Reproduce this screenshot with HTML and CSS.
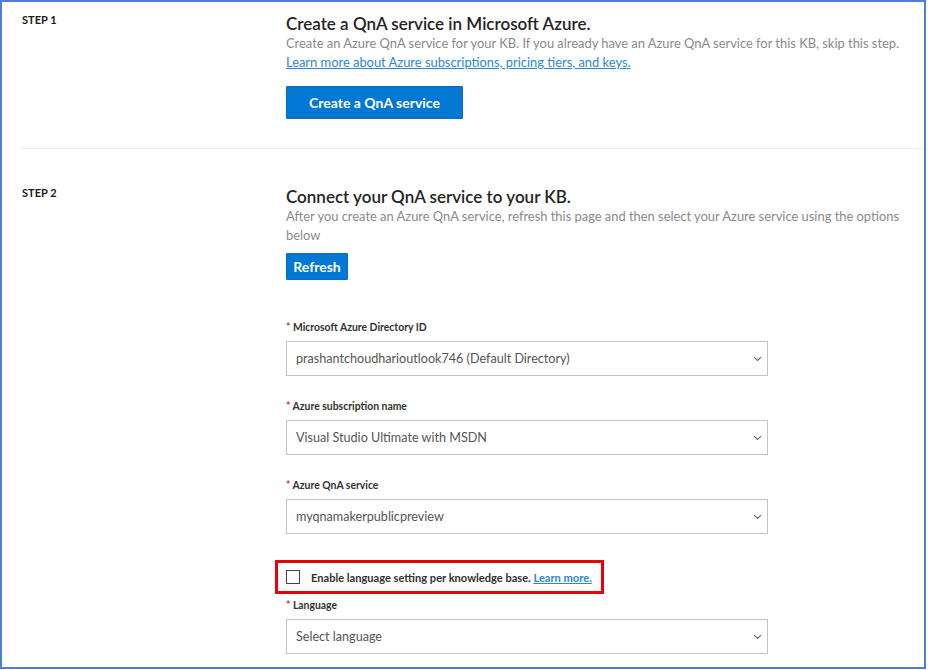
FILE: index.html
```html
<!DOCTYPE html>
<html lang="en">
<head>
<meta charset="utf-8">
<title>QnA service setup</title>
<link rel="stylesheet" href="styles.css">
</head>
<body>
<div class="frame">
  <section class="step step-one">
    <div class="step-label">STEP 1</div>
    <div class="step-body">
      <h2 class="step-title">Create a QnA service in Microsoft Azure.</h2>
      <p class="step-text">Create an Azure QnA service for your KB. If you already have an Azure QnA service for this KB, skip this step.</p>
      <p class="step-text"><a class="link" href="#">Learn more about Azure subscriptions, pricing tiers, and keys.</a></p>
      <button class="btn btn-large" type="button">Create a QnA service</button>
    </div>
  </section>
  <section class="step step-two">
    <div class="step-label">STEP 2</div>
    <div class="step-body">
      <h2 class="step-title">Connect your QnA service to your KB.</h2>
      <p class="step-text">After you create an Azure QnA service, refresh this page and then select your Azure service using the options below</p>
      <button class="btn btn-small" type="button">Refresh</button>

      <div class="field first-field">
        <div class="field-label"><span class="req">*</span> Microsoft Azure Directory ID</div>
        <div class="select"><span class="select-value">prashantchoudharioutlook746 (Default Directory)</span><svg class="chev" width="9" height="6" viewBox="0 0 9 6"><path d="M1 1.2l3.5 3.3 3.5-3.3" fill="none" stroke="#666" stroke-width="1.1"/></svg></div>
      </div>
      <div class="field">
        <div class="field-label"><span class="req">*</span> Azure subscription name</div>
        <div class="select"><span class="select-value">Visual Studio Ultimate with MSDN</span><svg class="chev" width="9" height="6" viewBox="0 0 9 6"><path d="M1 1.2l3.5 3.3 3.5-3.3" fill="none" stroke="#666" stroke-width="1.1"/></svg></div>
      </div>
      <div class="field">
        <div class="field-label"><span class="req">*</span> Azure QnA service</div>
        <div class="select"><span class="select-value">myqnamakerpublicpreview</span><svg class="chev" width="9" height="6" viewBox="0 0 9 6"><path d="M1 1.2l3.5 3.3 3.5-3.3" fill="none" stroke="#666" stroke-width="1.1"/></svg></div>
      </div>

      <div class="highlight">
        <span class="checkbox"></span>
        <span class="check-text">Enable language setting per knowledge base. <a class="link" href="#">Learn more.</a></span>
      </div>

      <div class="field lang-field">
        <div class="field-label"><span class="req">*</span> Language</div>
        <div class="select"><span class="select-value">Select language</span><svg class="chev" width="9" height="6" viewBox="0 0 9 6"><path d="M1 1.2l3.5 3.3 3.5-3.3" fill="none" stroke="#666" stroke-width="1.1"/></svg></div>
      </div>
    </div>
  </section>
</div>
</body>
</html>
```

FILE: styles.css
```css
* { box-sizing: border-box; }
html, body { margin: 0; padding: 0; background: #ffffff; }
body {
  font-family: "Lato", "Open Sans", "Liberation Sans", sans-serif;
  color: #252423;
  width: 928px;
  height: 670px;
  overflow: hidden;
}
.frame {
  width: 926px;
  height: 669px;
  border: 2px solid #4f7fd6;
  padding-left: 20px;
  overflow: hidden;
}
.step {
  display: grid;
  grid-template-columns: 264px 1fr;
}
.step-one {
  padding-top: 11px;
  padding-bottom: 29px;
  border-bottom: 1px solid #ececec;
}
.step-two {
  padding-top: 37px;
}
.step-label {
  font-size: 11px;
  font-weight: 700;
  line-height: 14px;
  color: #1b1a19;
}
.step-body { padding-right: 8px; }
.step-title {
  margin: 0;
  font-size: 17px;
  font-weight: 600;
  line-height: 21px;
  color: #252423;
}
.step-text {
  margin: 0;
  font-size: 12.9px;
  line-height: 19px;
  color: #8a8a8a;
}
.link { color: #2b88d8; text-decoration: underline; }
.btn {
  display: block;
  background: #0078d4;
  color: #ffffff;
  font-family: inherit;
  font-weight: 700;
  border: 1px solid #0b6cbd;
  border-radius: 1px;
  cursor: pointer;
}
.btn-large {
  margin-top: 14px;
  width: 177px;
  height: 33px;
  font-size: 14px;
  padding: 0;
}
.btn-small {
  margin-top: 8px;
  width: 62px;
  height: 27px;
  font-size: 14px;
  padding: 0;
}
.field { display: flex; flex-direction: column; gap: 6px; width: 482px; margin-top: 22px; }
.first-field { margin-top: 39px; }
.field-label {
  font-size: 10.4px;
  font-weight: 700;
  line-height: 16px;
  color: #323130;
}
.req { color: #d13438; }
.select {
  height: 35px;
  border: 1px solid #c4c4c4;
  display: flex;
  align-items: center;
  justify-content: space-between;
  padding: 0 5px 0 9px;
}
.select-value { font-size: 12.6px; color: #555555; }
.highlight {
  margin-top: 26px;
  margin-left: -11px;
  width: max-content;
  height: 34px;
  border: 3px solid #e8000b;
  display: flex;
  align-items: center;
  padding: 0 9px 0 8px;
}
.checkbox {
  width: 14px;
  height: 14px;
  border: 1px solid #444;
  background: #fff;
  flex: none;
}
.check-text {
  margin-left: 11px;
  font-size: 11.1px;
  font-weight: 700;
  color: #323130;
  white-space: nowrap;
}
.lang-field { margin-top: 3px; }
```
